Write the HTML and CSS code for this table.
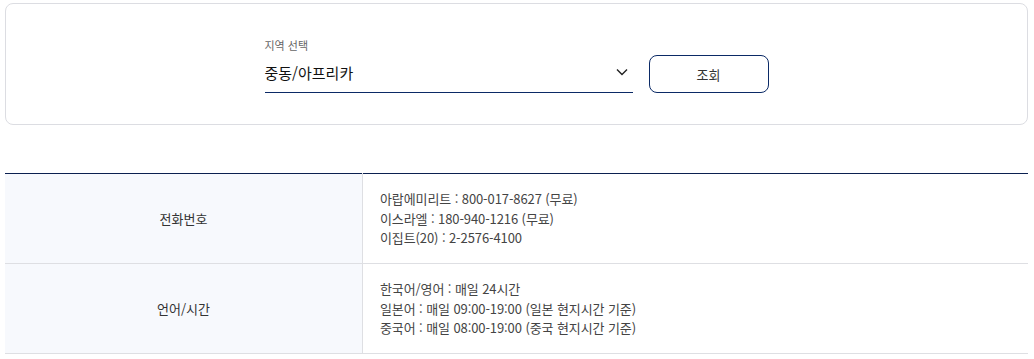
FILE: index.html
```html
<!DOCTYPE html>
<html lang="ko">
<head>
    <meta charset="UTF-8">
    <meta name="viewport" content="width=device-width, initial-scale=1.0">
    <title>고객센터 안내</title>
    <link rel="stylesheet" href="styles.css">
</head>
<body>
    <div class="search-box">
        <div class="search-inner">
            <div class="field">
                <label class="field-label" for="region">지역 선택</label>
                <div class="select-wrap">
                    <span class="select-value" id="region">중동/아프리카</span>
                    <svg class="chevron" width="12" height="8" viewBox="0 0 12 8">
                        <path d="M1 1.5 L6 6.5 L11 1.5" fill="none" stroke="#222" stroke-width="1.4"/>
                    </svg>
                </div>
            </div>
            <button class="btn-search" type="button">조회</button>
        </div>
    </div>

    <table class="info-table">
        <tbody>
            <tr>
                <th>전화번호</th>
                <td>
                    아랍에미리트 : 800-017-8627 (무료)<br>
                    이스라엘 : 180-940-1216 (무료)<br>
                    이집트(20) : 2-2576-4100
                </td>
            </tr>
            <tr>
                <th>언어/시간</th>
                <td>
                    한국어/영어 : 매일 24시간<br>
                    일본어 : 매일 09:00-19:00 (일본 현지시간 기준)<br>
                    중국어 : 매일 08:00-19:00 (중국 현지시간 기준)
                </td>
            </tr>
        </tbody>
    </table>
</body>
</html>
```
FILE: styles.css
```css
body {
    margin: 0;
    padding: 3px 6px 0 5px;
    font-family: "Noto Sans CJK KR", "Noto Sans", sans-serif;
    color: #333;
    background: #fff;
}
.search-box {
    border: 1px solid #dcdde2;
    border-radius: 8px;
    padding: 34px 0 31px;
}
.search-inner {
    display: flex;
    justify-content: center;
    align-items: flex-end;
    gap: 16px;
}
.field {
    width: 368px;
}
.field-label {
    display: block;
    font-size: 11px;
    line-height: 14px;
    color: #666;
}
.select-wrap {
    display: flex;
    align-items: center;
    justify-content: space-between;
    height: 40px;
    border-bottom: 1px solid #0b2a66;
}
.select-value {
    font-size: 15px;
    color: #111;
    padding-top: 1px;
}
.chevron {
    margin-right: 5px;
}
.btn-search {
    width: 120px;
    height: 38px;
    border: 1px solid #0b2a66;
    border-radius: 8px;
    background: #fff;
    font-family: inherit;
    font-size: 13px;
    color: #333;
}
.info-table {
    width: 100%;
    margin-top: 48px;
    border-collapse: collapse;
    border-top: 1px solid #0b2050;
}
.info-table th,
.info-table td {
    border-bottom: 1px solid #dedfe3;
    font-size: 13px;
    line-height: 19.5px;
    font-weight: normal;
    height: 89px;
    padding: 0;
}
.info-table th {
    width: 357px;
    background: #f7f9fd;
    border-right: 1px solid #dedfe3;
    color: #333;
}
.info-table td {
    padding-left: 17px;
    color: #444;
    letter-spacing: -0.1px;
}
```
